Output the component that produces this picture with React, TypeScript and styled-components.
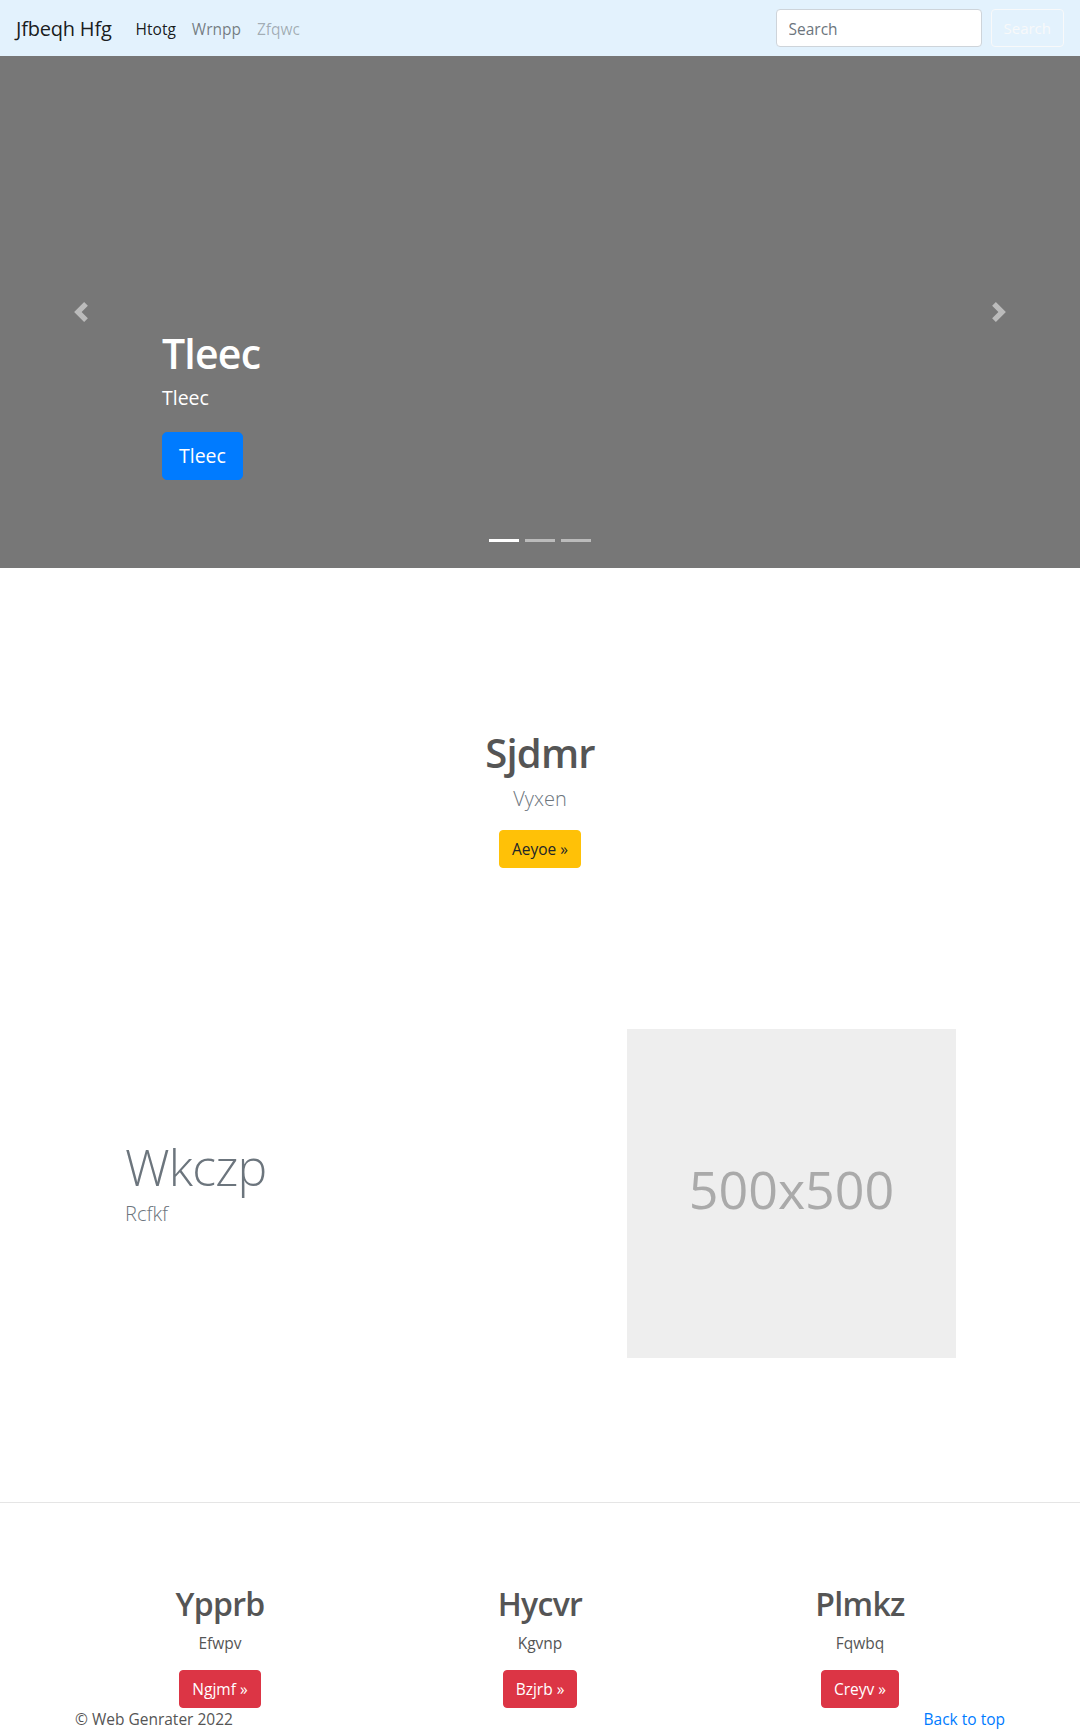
import React from "react";
import styled, { createGlobalStyle } from "styled-components";

const GlobalStyle = createGlobalStyle`
  * {
    box-sizing: border-box;
  }

  body {
    margin: 0;
    font-family: "Open Sans", "Noto Sans", sans-serif;
    font-size: 16px;
    line-height: 1.5;
    color: #555;
    background: #fff;
  }

  h1,
  h2,
  p {
    margin: 0;
  }
`;

const Navbar = styled.nav`
  height: 56px;
  padding: 0 16px;
  display: flex;
  align-items: center;
  background: #e3f2fd;
`;

const Brand = styled.a`
  font-size: 20px;
  line-height: 30px;
  letter-spacing: -0.2px;
  color: rgba(0, 0, 0, 0.9);
  margin: 2px 16px 0 0;
  text-decoration: none;
`;

const NavList = styled.ul`
  display: flex;
  flex: 1;
  list-style: none;
  margin: 4px 0 0;
  padding: 0;
`;

const linkColors = {
  active: "rgba(0, 0, 0, 0.9)",
  normal: "rgba(0, 0, 0, 0.5)",
  disabled: "rgba(0, 0, 0, 0.3)",
};

const NavLink = styled.a<{ $state: keyof typeof linkColors }>`
  display: block;
  padding: 8px;
  font-size: 15.5px;
  color: ${(p) => linkColors[p.$state]};
  text-decoration: none;
`;

const SearchForm = styled.form`
  display: flex;
  align-items: center;
  gap: 9px;
`;

const SearchInput = styled.input`
  width: 206px;
  height: 38px;
  padding: 7px 12px 5px;
  font: inherit;
  font-size: 15.5px;
  color: #495057;
  background: #fff;
  border: 1px solid #ced4da;
  border-radius: 4px;

  &::placeholder {
    color: #6c757d;
  }
`;

const OutlineButton = styled.button`
  height: 38px;
  padding: 6px 12px;
  font: inherit;
  font-size: 15px;
  color: #f8f9fa;
  background: transparent;
  border: 1px solid #f8f9fa;
  border-radius: 4px;
`;

const Carousel = styled.section`
  height: 512px;
  display: flex;
  background: #777;
`;

const Control = styled.a`
  width: 15%;
  display: flex;
  align-items: center;
  justify-content: center;
  opacity: 0.5;
`;

const Caption = styled.div`
  flex: 1;
  display: flex;
  flex-direction: column;
  justify-content: flex-end;
  align-items: flex-start;
  padding-bottom: 26px;
  color: #fff;
`;

const CaptionTitle = styled.h1`
  font-size: 41px;
  font-weight: 600;
  line-height: 1.2;
  letter-spacing: -0.8px;
  margin-bottom: 5px;
`;

const CaptionText = styled.p`
  font-size: 19.5px;
  line-height: 30px;
  margin-bottom: 19px;
`;

const Indicators = styled.ol`
  align-self: center;
  display: flex;
  gap: 6px;
  list-style: none;
  margin: 59px 0 0;
  padding: 0;
`;

const Indicator = styled.li<{ $active?: boolean }>`
  width: 30px;
  height: 3px;
  background: #fff;
  opacity: ${(p) => (p.$active ? 1 : 0.5)};
`;

const btnColors = {
  primary: { bg: "#007bff", fg: "#fff" },
  warning: { bg: "#ffc107", fg: "#212529" },
  danger: { bg: "#dc3545", fg: "#fff" },
};

const Button = styled.a<{ $variant: keyof typeof btnColors; $large?: boolean }>`
  display: inline-block;
  padding: ${(p) => (p.$large ? "8px 16px" : "6px 12px")};
  font-size: ${(p) => (p.$large ? "19.5px" : "15.5px")};
  line-height: ${(p) => (p.$large ? "30px" : "24px")};
  color: ${(p) => btnColors[p.$variant].fg};
  background: ${(p) => btnColors[p.$variant].bg};
  border: 1px solid ${(p) => btnColors[p.$variant].bg};
  border-radius: ${(p) => (p.$large ? "5px" : "4px")};
  text-decoration: none;
`;

const Container = styled.div`
  width: 960px;
  margin: 0 auto;
  padding: 0 15px;
`;

const Intro = styled.section`
  padding: 161px 0;
  text-align: center;
`;

const IntroTitle = styled.h1`
  font-size: 40px;
  font-weight: 600;
  line-height: 1.2;
  letter-spacing: -0.8px;
  margin-bottom: 7px;
`;

const Lead = styled.p`
  font-size: 20px;
  font-weight: 300;
  line-height: 30px;
  color: #6c757d;
  margin-bottom: 16px;
`;

const Featurette = styled.div`
  display: grid;
  grid-template-columns: 1fr 329px;
  align-items: center;
  padding: 0 49px 0 50px;
`;

const FeaturetteHeading = styled.h2`
  font-size: 50px;
  font-weight: 300;
  line-height: 1;
  letter-spacing: -0.8px;
  color: #6c757d;
  margin-bottom: 7px;
`;

const Placeholder = styled.div`
  width: 329px;
  height: 329px;
  display: flex;
  align-items: center;
  justify-content: center;
  padding-bottom: 10px;
  background: #eee;
  color: #aaa;
  font-size: 52px;
`;

const Divider = styled.hr`
  margin: 144px 0 82px;
  border: 0;
  border-top: 1px solid rgba(0, 0, 0, 0.1);
`;

const Marketing = styled.div`
  width: 960px;
  margin: 0 auto;
  display: grid;
  grid-template-columns: repeat(3, 1fr);
  text-align: center;
`;

const ColTitle = styled.h2`
  font-size: 32px;
  font-weight: 600;
  line-height: 1.2;
  letter-spacing: -0.7px;
  margin-bottom: 9px;
`;

const ColText = styled.p`
  font-size: 15.5px;
  margin-bottom: 14px;
`;

const Footer = styled.footer`
  display: flex;
  justify-content: space-between;
  font-size: 15.5px;
`;

const TopLink = styled.a`
  color: #007bff;
  text-decoration: none;
`;

const Chevron = ({ dir }: { dir: "prev" | "next" }) => (
  <svg width="20" height="20" viewBox="0 0 8 8" fill="#fff">
    {dir === "prev" ? (
      <path d="M5.25 0l-4 4 4 4 1.5-1.5L4.25 4l2.5-2.5L5.25 0z" />
    ) : (
      <path d="M2.75 0l-1.5 1.5L3.75 4l-2.5 2.5L2.75 8l4-4-4-4z" />
    )}
  </svg>
);

const columns = [
  { title: "Ypprb", text: "Efwpv", action: "Ngjmf" },
  { title: "Hycvr", text: "Kgvnp", action: "Bzjrb" },
  { title: "Plmkz", text: "Fqwbq", action: "Creyv" },
];

export default function App() {
  return (
    <>
      <GlobalStyle />
      <Navbar>
        <Brand href="#">Jfbeqh Hfg</Brand>
        <NavList>
          <li>
            <NavLink $state="active" href="#">Htotg</NavLink>
          </li>
          <li>
            <NavLink $state="normal" href="#">Wrnpp</NavLink>
          </li>
          <li>
            <NavLink $state="disabled" href="#">Zfqwc</NavLink>
          </li>
        </NavList>
        <SearchForm onSubmit={(e) => e.preventDefault()}>
          <SearchInput type="search" placeholder="Search" aria-label="Search" />
          <OutlineButton type="submit">Search</OutlineButton>
        </SearchForm>
      </Navbar>

      <Carousel>
        <Control href="#">
          <Chevron dir="prev" />
        </Control>
        <Caption>
          <CaptionTitle>Tleec</CaptionTitle>
          <CaptionText>Tleec</CaptionText>
          <Button $variant="primary" $large href="#">
            Tleec
          </Button>
          <Indicators>
            <Indicator $active />
            <Indicator />
            <Indicator />
          </Indicators>
        </Caption>
        <Control href="#">
          <Chevron dir="next" />
        </Control>
      </Carousel>

      <Container>
        <Intro>
          <IntroTitle>Sjdmr</IntroTitle>
          <Lead>Vyxen</Lead>
          <Button $variant="warning" href="#">
            Aeyoe »
          </Button>
        </Intro>

        <Featurette>
          <div>
            <FeaturetteHeading>Wkczp</FeaturetteHeading>
            <Lead>Rcfkf</Lead>
          </div>
          <Placeholder>500x500</Placeholder>
        </Featurette>
      </Container>

      <Divider />

      <Marketing>
        {columns.map((c) => (
          <div key={c.title}>
            <ColTitle>{c.title}</ColTitle>
            <ColText>{c.text}</ColText>
            <Button $variant="danger" href="#">
              {c.action} »
            </Button>
          </div>
        ))}
      </Marketing>

      <Container>
        <Footer>
          <p>© Web Genrater 2022</p>
          <TopLink href="#">Back to top</TopLink>
        </Footer>
      </Container>
    </>
  );
}
